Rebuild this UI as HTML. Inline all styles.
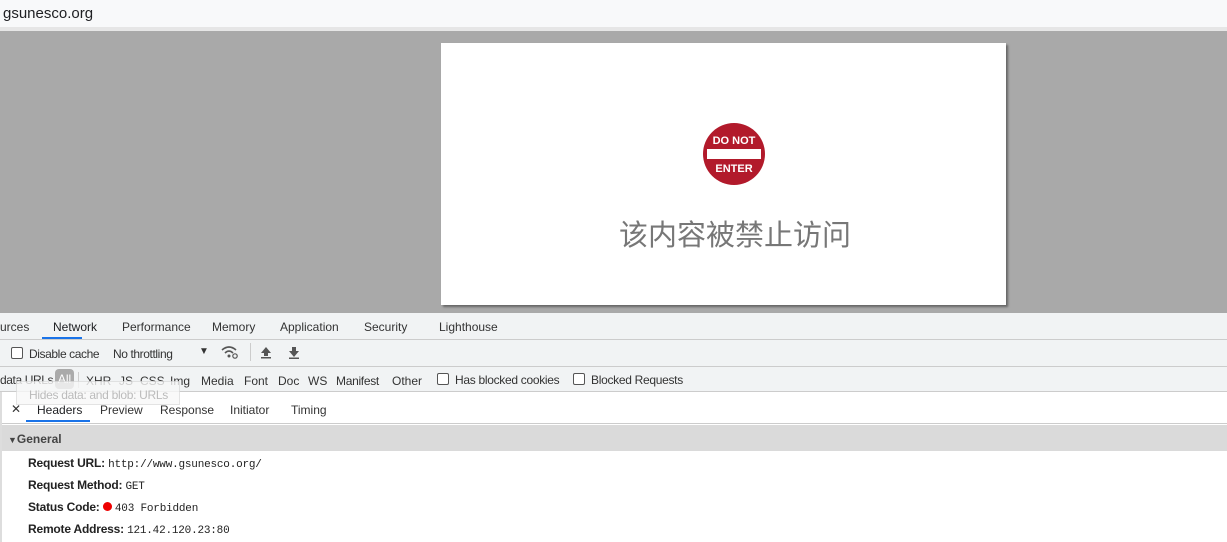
<!DOCTYPE html><html><head><meta charset="utf-8"><style>
body{margin:0;width:1227px;height:542px;overflow:hidden;background:#fff;font-family:"Liberation Sans","Noto Sans CJK SC",sans-serif;font-size:12px;color:#333;position:relative}
.a{position:absolute;white-space:nowrap}
.cb{position:absolute;width:10px;height:10px;border:1px solid #555;border-radius:2px;background:#fff}
.m{font-family:'Liberation Mono';font-size:11px;color:#222}
.l{color:#222;letter-spacing:-0.2px}
</style></head><body>
<div class="a" style="left:0;top:0;width:1227px;height:27px;background:#f8f9fa"></div>
<div class="a" style="left:3px;top:5px;font-size:15px;color:#202124">gsunesco.org</div>
<div class="a" style="left:0;top:27px;width:1227px;height:4px;background:#e6e6e6"></div>
<div class="a" style="left:0;top:31px;width:1227px;height:282px;background:#a9a9a9"></div>
<div class="a" style="left:441px;top:43px;width:565px;height:262px;background:#fff;box-shadow:2px 2px 2px #666"></div>
<svg class="a" style="left:703px;top:123px" width="62" height="62"><circle cx="31" cy="31" r="31" fill="#b21a2b"/><rect x="4" y="26" width="54" height="10" fill="#fff"/><text x="31" y="21" fill="#fff" font-size="11" font-weight="bold" text-anchor="middle" font-family="Liberation Sans">DO NOT</text><text x="31" y="49" fill="#fff" font-size="11" font-weight="bold" text-anchor="middle" font-family="Liberation Sans">ENTER</text></svg>
<div class="a" style="left:619px;top:212px;font-size:29px;color:#777">该内容被禁止访问</div>
<div class="a" style="left:0;top:313px;width:1227px;height:78px;background:#f1f3f4"></div>
<div class="a" style="left:0;top:339px;width:1227px;height:1px;background:#ccc"></div>
<div class="a" style="left:0;top:366px;width:1227px;height:1px;background:#ccc"></div>
<div class="a" style="left:0;top:391px;width:1227px;height:1px;background:#ccc"></div>
<div class="a" style="left:0;top:320px">urces</div>
<div class="a" style="left:53px;top:320px;color:#202124">Network</div>
<div class="a" style="left:42px;top:337px;width:40px;height:2px;background:#1a73e8"></div>
<div class="a" style="left:122px;top:320px">Performance</div>
<div class="a" style="left:212px;top:320px">Memory</div>
<div class="a" style="left:280px;top:320px">Application</div>
<div class="a" style="left:364px;top:320px">Security</div>
<div class="a" style="left:439px;top:320px">Lighthouse</div>
<div class="cb" style="left:11px;top:347px"></div>
<div class="a" style="left:29px;top:347px;letter-spacing:-0.4px">Disable cache</div>
<div class="a" style="left:113px;top:347px;letter-spacing:-0.4px">No throttling</div>
<div class="a" style="left:199px;top:346px;font-size:10px">▼</div>
<svg class="a" style="left:221px;top:345px" width="18" height="14"><path d="M1 5 Q8 -1 15 5 M4 8 Q8 4 12 8" stroke="#555" stroke-width="1.6" fill="none"/><circle cx="8" cy="11" r="1.5" fill="#555"/><circle cx="14" cy="11" r="2.2" fill="none" stroke="#555" stroke-width="1.2"/></svg>
<div class="a" style="left:250px;top:343px;width:1px;height:18px;background:#ccc"></div>
<svg class="a" style="left:260px;top:346px" width="12" height="13"><path d="M6 1 L1 7 H4 V10 H8 V7 H11 Z" fill="#555"/><rect x="1" y="11" width="10" height="1.5" fill="#555"/></svg>
<svg class="a" style="left:288px;top:346px" width="12" height="13"><path d="M6 11 L1 5 H4 V1 H8 V5 H11 Z" fill="#555"/><rect x="1" y="11.5" width="10" height="1.5" fill="#555"/></svg>
<div class="a" style="left:0;top:373px;letter-spacing:-0.4px">data URLs</div>
<div class="a" style="left:55px;top:369px;width:19px;height:20px;border-radius:4px;background:#aaa;color:#fff;text-align:center;line-height:20px">All</div>
<div class="a" style="left:78px;top:372px;width:1px;height:16px;background:#ccc"></div>
<div class="a" style="left:86px;top:374px">XHR</div>
<div class="a" style="left:119px;top:374px">JS</div>
<div class="a" style="left:140px;top:374px">CSS</div>
<div class="a" style="left:170px;top:374px">Img</div>
<div class="a" style="left:201px;top:374px">Media</div>
<div class="a" style="left:244px;top:374px">Font</div>
<div class="a" style="left:278px;top:374px">Doc</div>
<div class="a" style="left:308px;top:374px">WS</div>
<div class="a" style="left:336px;top:374px;letter-spacing:-0.3px">Manifest</div>
<div class="a" style="left:392px;top:374px">Other</div>
<div class="cb" style="left:437px;top:373px"></div>
<div class="a" style="left:455px;top:373px;letter-spacing:-0.3px">Has blocked cookies</div>
<div class="cb" style="left:573px;top:373px"></div>
<div class="a" style="left:591px;top:373px;letter-spacing:-0.3px">Blocked Requests</div>
<div class="a" style="left:16px;top:381px;width:162px;height:22px;border:1px solid #ddd;background:#f8f8f8;opacity:.8"></div>
<div class="a" style="left:29px;top:388px;color:#bbb;letter-spacing:-0.3px">Hides data: and blob: URLs</div>
<div class="a" style="left:0;top:392px;width:2px;height:150px;background:#ddd"></div>
<div class="a" style="left:11px;top:402px">✕</div>
<div class="a" style="left:37px;top:403px;color:#202124">Headers</div>
<div class="a" style="left:26px;top:420px;width:64px;height:2px;background:#1a73e8"></div>
<div class="a" style="left:100px;top:403px">Preview</div>
<div class="a" style="left:160px;top:403px">Response</div>
<div class="a" style="left:230px;top:403px">Initiator</div>
<div class="a" style="left:291px;top:403px">Timing</div>
<div class="a" style="left:2px;top:423px;width:1225px;height:1px;background:#ccc"></div>
<div class="a" style="left:2px;top:425px;width:1225px;height:26px;background:#dadada"></div>
<div class="a" style="left:8px;top:432px;color:#444;font-weight:bold"><span style="font-size:9px">▼</span>General</div>
<div class="a l" style="left:28px;top:456px"><b>Request URL:</b> <span class="m">http://www.gsunesco.org/</span></div>
<div class="a l" style="left:28px;top:478px"><b>Request Method:</b> <span class="m">GET</span></div>
<div class="a l" style="left:28px;top:500px"><b>Status Code:</b> <span style="display:inline-block;width:9px;height:9px;border-radius:50%;background:#e00"></span> <span class="m">403 Forbidden</span></div>
<div class="a l" style="left:28px;top:522px"><b>Remote Address:</b> <span class="m">121.42.120.23:80</span></div>
</body></html>
